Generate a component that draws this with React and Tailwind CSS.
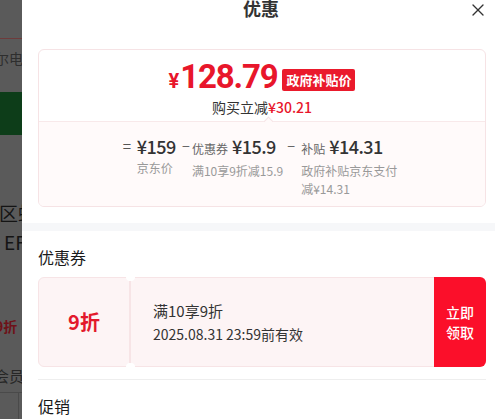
import { X } from 'lucide-react'

const font = { fontFamily: '"Noto Sans CJK SC", "Noto Sans", sans-serif' }

function BackdropStrip() {
  return (
    <div className="w-[22px] shrink-0 h-full bg-[#5a5a5a] overflow-hidden flex flex-col">
      <div className="h-[38px]" />
      <div className="h-px bg-[#6e3b3b] w-full" />
      <div className="mt-[11px] -ml-[5px] whitespace-nowrap text-[14px] leading-[16px] text-[#2e2e2e]">尔电</div>
      <div className="mt-[26px] h-[43px] bg-[#0d3d19]" />
      <div className="mt-[67px] -ml-[1px] whitespace-nowrap text-[19px] leading-[22px] text-[#141414]">区蚊</div>
      <div className="mt-[8px] ml-[4px] whitespace-nowrap text-[19px] leading-[20px] text-[#141414]">EF</div>
      <div className="mt-[66px] -ml-[5px] whitespace-nowrap text-[14px] leading-[16px] font-bold text-[#6e1118]">9折</div>
      <div className="mt-[34px] -ml-[6px] whitespace-nowrap text-[15px] leading-[16px] text-[#262626]">会员</div>
      <div className="mt-[8px] h-px bg-[#4a4a4a] w-full" />
      <div className="flex-1 flex justify-end pr-[3px]">
        <div className="w-px h-full bg-[#4a4a4a]" />
      </div>
    </div>
  )
}

function PriceCard() {
  return (
    <div className="mx-4 border border-[#f6e3e5] rounded-[6px] overflow-hidden">
      <div className="h-[71px] flex flex-col items-center pt-[11px]">
        <div className="flex items-center gap-[5px]">
          <div className="text-[#e8162b] font-bold flex items-baseline leading-[32px] font-[Roboto]">
            <span className="text-[20px] mr-[1px]">¥</span>
            <span className="text-[33px] tracking-[-1.2px]">128.79</span>
          </div>
          <span className="bg-[#ea1a2c] text-white text-[13px] font-bold leading-[22px] px-[4px] rounded-[2px] mt-[2px]">
            政府补贴价
          </span>
        </div>
        <div className="text-[14px] leading-[18px] text-[#333] mt-[1px]">
          购买立减<span className="text-[#e8162b] font-medium">¥30.21</span>
        </div>
      </div>
      <div className="relative h-[85px] bg-[#fffafa] border-t border-[#f8e9ea] pt-[12px]">
        <div className="absolute left-[226px] -top-[4px] w-[7px] h-[7px] rotate-45 bg-[#fffafa] border-l border-t border-[#f6e3e5]" />
        <div className="flex justify-center">
          <div className="flex items-start">
            <span className="text-[15px] leading-[24px] text-[#555] w-[14px]">=</span>
            <div>
              <div className="text-[18px] leading-[24px] font-medium tracking-[-0.5px] text-[#333]">¥159</div>
              <div className="text-[12px] leading-[18px] text-[#999] mt-[1px]">京东价</div>
            </div>
          </div>
          <div className="flex items-start ml-[6px]">
            <span className="text-[14px] leading-[24px] text-[#666] w-[10px]">−</span>
            <div>
              <div className="flex items-baseline gap-[4px] leading-[24px]">
                <span className="text-[12px] text-[#666]">优惠券</span>
                <span className="text-[18px] font-medium tracking-[-0.5px] text-[#333]">¥15.9</span>
              </div>
              <div className="text-[12px] leading-[18px] text-[#999] mt-[1px]">满10享9折减15.9</div>
            </div>
          </div>
          <div className="flex items-start ml-[4px]">
            <span className="text-[14px] leading-[24px] text-[#666] w-[14px]">−</span>
            <div className="w-[100px]">
              <div className="flex items-baseline gap-[4px] leading-[24px]">
                <span className="text-[12px] text-[#666]">补贴</span>
                <span className="text-[18px] font-medium tracking-[-0.5px] text-[#333]">¥14.31</span>
              </div>
              <div className="text-[12px] leading-[18px] text-[#999] mt-[1px]">政府补贴京东支付减¥14.31</div>
            </div>
          </div>
        </div>
      </div>
    </div>
  )
}

function CouponCard() {
  return (
    <div className="mx-4 h-[90px] flex">
      <div className="relative w-[92px] bg-[#fdf4f5] border border-[#f7e4e6] rounded-l-[6px] flex items-center justify-center">
        <span className="text-[20px] font-bold text-[#e3192c] leading-none">9折</span>
        <div className="absolute -right-[5px] -top-[5px] w-[8px] h-[8px] rounded-full bg-white" />
        <div className="absolute -right-[5px] -bottom-[5px] w-[8px] h-[8px] rounded-full bg-white" />
      </div>
      <div className="relative flex-1 bg-[#fdf4f5] border-y border-l border-[#f7e4e6] flex flex-col justify-center pl-[22px] gap-[3px]">
        <div className="text-[15px] leading-[20px] text-[#333]">满10享9折</div>
        <div className="text-[14px] leading-[20px] text-[#333]">2025.08.31 23:59前有效</div>
        <div className="absolute -left-[4px] -top-[5px] w-[8px] h-[8px] rounded-full bg-white" />
        <div className="absolute -left-[4px] -bottom-[5px] w-[8px] h-[8px] rounded-full bg-white" />
      </div>
      <button className="w-[52px] bg-[#fb0f2a] rounded-r-[6px] text-white text-[14px] leading-[20px] font-medium flex flex-col items-center justify-center">
        <span>立即</span>
        <span>领取</span>
      </button>
    </div>
  )
}

export default function App() {
  return (
    <div className="w-[495px] h-[419px] flex overflow-hidden bg-white" style={font}>
      <BackdropStrip />
      <div className="w-[480px] shrink-0 h-full bg-white flex flex-col">
        <div className="h-[49px] flex items-start justify-between px-4">
          <div className="w-[16px]" />
          <span className="text-[18px] leading-[16px] font-bold text-[#333]">优惠</span>
          <X size={20} strokeWidth={1.6} className="text-[#333] -mr-[2px]" />
        </div>
        <PriceCard />
        <div className="mt-[16px] h-[8px] bg-[#f6f7f9]" />
        <div className="px-4">
          <div className="pt-[17px] pb-[11px] text-[16px] leading-[18px] text-[#1a1a1a]">优惠券</div>
        </div>
        <CouponCard />
        <div className="mx-4 mt-[12px] h-px bg-[#eeeeee]" />
        <div className="px-4 pt-[17px] text-[16px] leading-[18px] text-[#1a1a1a]">促销</div>
      </div>
    </div>
  )
}
